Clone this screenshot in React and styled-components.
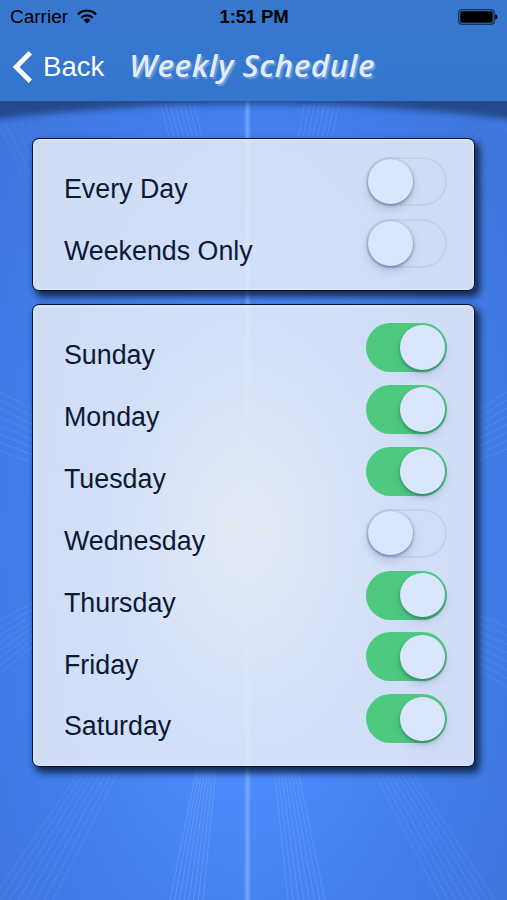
import * as React from "react";
import styled, { createGlobalStyle } from "styled-components";

const GROUPS = [
  {
    name: "presets",
    rows: [
      { label: "Every Day", on: false },
      { label: "Weekends Only", on: false },
    ],
  },
  {
    name: "days",
    rows: [
      { label: "Sunday", on: true },
      { label: "Monday", on: true },
      { label: "Tuesday", on: true },
      { label: "Wednesday", on: false },
      { label: "Thursday", on: true },
      { label: "Friday", on: true },
      { label: "Saturday", on: true },
    ],
  },
];

// each bundle fans from one edge segment to another: [x1, y1, x2, y2] for the first and last line
const BUNDLES = [
  { from: [75, 778, -8, 900], to: [117, 774, 53, 900], opacity: 0.12 },
  { from: [197, 767, 170, 900], to: [216, 767, 203, 900], opacity: 0.22 },
  { from: [274, 767, 288, 900], to: [297, 767, 325, 900], opacity: 0.18 },
  { from: [375, 774, 440, 900], to: [413, 774, 495, 900], opacity: 0.13 },
  { from: [160, 101, 170, 140], to: [193, 101, 203, 140], opacity: 0.17 },
  { from: [305, 101, 298, 140], to: [340, 101, 331, 140], opacity: 0.17 },
  { from: [0, 128, 34, 200], to: [22, 112, 42, 140], opacity: 0.08, count: 5 },
  { from: [507, 128, 473, 200], to: [485, 112, 465, 140], opacity: 0.06, count: 5 },
  { from: [0, 392, 34, 410], to: [0, 451, 34, 463], opacity: 0.15 },
  { from: [0, 620, 34, 602], to: [0, 673, 34, 645], opacity: 0.13 },
  { from: [507, 392, 473, 414], to: [507, 449, 473, 463], opacity: 0.15 },
  { from: [507, 627, 473, 613], to: [507, 687, 473, 667], opacity: 0.13 },
];

export default function App() {
  const [groups, setGroups] = React.useState(GROUPS);

  const toggle = (name, label) => {
    setGroups(
      groups.map((g) =>
        g.name !== name
          ? g
          : {
              ...g,
              rows: g.rows.map((r) =>
                r.label === label ? { ...r, on: !r.on } : r
              ),
            }
      )
    );
  };

  return (
    <>
      <GlobalStyle />
      <Screen>
        <Backdrop />
        <Header>
          <StatusBar>
            <Carrier>
              Carrier <WifiIcon />
            </Carrier>
            <Clock>1:51 PM</Clock>
            <BatteryIcon />
          </StatusBar>
          <NavBar>
            <BackButton>
              <svg width="22" height="34" viewBox="0 0 22 34">
                <path
                  d="M19.3 2.8 L5.1 17 L19.3 31.2"
                  fill="none"
                  stroke="#fff"
                  strokeWidth="4.8"
                />
              </svg>
              Back
            </BackButton>
            <Title>Weekly Schedule</Title>
          </NavBar>
        </Header>
        <Content>
          {groups.map((g) => (
            <Panel key={g.name}>
              {g.rows.map((r) => (
                <Row key={r.label}>
                  <Label>{r.label}</Label>
                  <Switch
                    role="switch"
                    aria-checked={r.on}
                    $on={r.on}
                    onClick={() => toggle(g.name, r.label)}
                  >
                    <Knob $on={r.on} />
                  </Switch>
                </Row>
              ))}
            </Panel>
          ))}
        </Content>
      </Screen>
    </>
  );
}

const Bundle = ({ from, to, opacity, count = 8 }) => {
  return (
    <g stroke="#a9ccff" strokeOpacity={opacity} strokeWidth="1.2">
      {[...Array(count)].map((_, i) => {
        const [x1, y1, x2, y2] = from.map(
          (v, k) => v + ((to[k] - v) * i) / (count - 1)
        );
        return <line key={i} x1={x1} y1={y1} x2={x2} y2={y2} />;
      })}
    </g>
  );
};

const Backdrop = () => {
  return (
    <BackdropSvg viewBox="0 0 507 900" preserveAspectRatio="none">
      <defs>
        <radialGradient
          id="base"
          gradientUnits="userSpaceOnUse"
          cx="0"
          cy="0"
          r="1"
          gradientTransform="translate(247 540) scale(310 620)"
        >
          <stop offset="0" stopColor="#5897ff" />
          <stop offset="0.4" stopColor="#4b8afb" />
          <stop offset="0.7" stopColor="#427eec" />
          <stop offset="1" stopColor="#3f77dd" />
        </radialGradient>
        <radialGradient
          id="glow"
          gradientUnits="userSpaceOnUse"
          cx="0"
          cy="0"
          r="1"
          gradientTransform="translate(247 532) scale(160 230)"
        >
          <stop offset="0" stopColor="#d4dbe6" stopOpacity="0.8" />
          <stop offset="0.45" stopColor="#c0d2e8" stopOpacity="0.45" />
          <stop offset="1" stopColor="#8ab4f4" stopOpacity="0" />
        </radialGradient>
        <linearGradient id="beam">
          <stop offset="0" stopColor="#8cc0ff" stopOpacity="0" />
          <stop offset="0.5" stopColor="#8cc0ff" stopOpacity="0.6" />
          <stop offset="1" stopColor="#8cc0ff" stopOpacity="0" />
        </linearGradient>
        <filter id="soft" x="-10%" y="-50%" width="120%" height="200%">
          <feGaussianBlur stdDeviation="3" />
        </filter>
      </defs>
      <rect width="507" height="900" fill="url(#base)" />
      <ellipse cx="247" cy="532" rx="160" ry="230" fill="url(#glow)" />
      {BUNDLES.map((b, i) => (
        <Bundle key={i} {...b} />
      ))}
      <rect x="243.5" y="101" width="8" height="799" fill="url(#beam)" />
      <path
        d="M-10 90 H517 V120 Q390 104 253 104 Q117 104 -10 120 Z"
        fill="#203f7c"
        fillOpacity="0.85"
        filter="url(#soft)"
      />
    </BackdropSvg>
  );
};

const WifiIcon = () => {
  return (
    <svg width="20" height="15" viewBox="0 0 20 15">
      <g fill="none" stroke="#000" strokeWidth="2.2">
        <path d="M0.9 5.4 A12.8 12.8 0 0 1 19.1 5.4" />
        <path d="M4.3 8.8 A8.1 8.1 0 0 1 15.7 8.8" />
      </g>
      <path d="M6.6 11 A4.8 4.8 0 0 1 13.4 11 L10 14.4 Z" fill="#000" />
    </svg>
  );
};

const BatteryIcon = () => {
  return (
    <svg width="40" height="16" viewBox="0 0 40 16">
      <rect
        x="0.8"
        y="0.8"
        width="35.4"
        height="14.4"
        rx="3"
        fill="none"
        stroke="#0b1f3d"
        strokeWidth="1.1"
      />
      <rect x="2.3" y="2.3" width="32.4" height="11.4" rx="1.6" fill="#000" />
      <path d="M37.2 5.3 Q39.6 6 39.6 8 Q39.6 10 37.2 10.7 Z" fill="#000" />
    </svg>
  );
};

const GlobalStyle = createGlobalStyle`
  body {
    margin: 0;
    font-family: "Liberation Sans", Arial, sans-serif;
  }
`;

const Screen = styled.div`
  position: relative;
  height: 900px;
  overflow: hidden;
  background-color: #427dea;
`;

const BackdropSvg = styled.svg`
  position: absolute;
  inset: 0;
  width: 100%;
  height: 100%;
`;

const Header = styled.header`
  position: relative;
  height: 101px;
  background: linear-gradient(#3878cf, #3475ce);
`;

const StatusBar = styled.div`
  display: grid;
  grid-template-columns: 1fr auto 1fr;
  align-items: center;
  height: 33px;
  padding: 0 9px 0 10px;
  box-sizing: border-box;
  color: #000;
  > svg {
    justify-self: end;
  }
`;

const Carrier = styled.span`
  display: flex;
  align-items: center;
  gap: 9px;
  font-size: 19px;
`;

const Clock = styled.span`
  font-size: 18.6px;
  font-weight: bold;
  letter-spacing: -0.2px;
`;

const NavBar = styled.div`
  display: flex;
  align-items: center;
  height: 68px;
  gap: 25px;
  padding-left: 11px;
`;

const BackButton = styled.button`
  display: flex;
  align-items: center;
  gap: 10px;
  padding: 0;
  border: 0;
  background: none;
  color: #fff;
  font-family: inherit;
  font-size: 27.6px;
`;

const Title = styled.h1`
  margin: 0;
  padding-bottom: 4px;
  font-family: "Open Sans", "Noto Sans", sans-serif;
  font-size: 31.5px;
  font-weight: 650;
  font-style: italic;
  line-height: 40px;
  letter-spacing: 0.5px;
  white-space: nowrap;
  color: #e2ecff;
  text-shadow: 2px 2px 1.5px rgba(155, 187, 230, 0.55);
`;

const Content = styled.main`
  position: relative;
  display: grid;
  gap: 13px;
  padding: 37px 32px 0;
`;

const Panel = styled.section`
  box-sizing: border-box;
  padding: 11.5px 27px 16.1px 31px;
  border: 1.5px solid #06112a;
  border-radius: 7px;
  background-color: rgba(236, 240, 247, 0.84);
  background-clip: padding-box;
  box-shadow: 4px 5px 7px 1px rgba(12, 27, 60, 0.85),
    inset 0 0 2px 1px rgba(232, 243, 255, 0.6);
`;

const Row = styled.div`
  display: flex;
  align-items: center;
  justify-content: space-between;
  height: 61.85px;
`;

const Label = styled.span`
  padding-top: 15.4px;
  font-size: 26.8px;
  line-height: 30px;
  color: #0b1934;
`;

const Switch = styled.button`
  display: flex;
  align-items: center;
  justify-content: ${(p) => (p.$on ? "flex-end" : "flex-start")};
  box-sizing: border-box;
  width: 81px;
  height: 49px;
  padding: 0 ${(p) => (p.$on ? "2.5px" : "0")};
  border: ${(p) => (p.$on ? "0" : "2px solid rgba(172, 182, 204, 0.32)")};
  border-radius: 25px;
  background-color: ${(p) => (p.$on ? "#4dca80" : "transparent")};
`;

const Knob = styled.span`
  width: 44.5px;
  height: 44.5px;
  border-radius: 50%;
  background-color: #dae6fc;
  box-shadow: ${(p) =>
    p.$on
      ? "0 2px 3px rgba(15, 70, 60, 0.4), 0 5px 9px rgba(40, 60, 110, 0.15)"
      : "0 1px 3px rgba(40, 60, 110, 0.6), 0 5px 9px rgba(40, 60, 110, 0.2)"};
`;
